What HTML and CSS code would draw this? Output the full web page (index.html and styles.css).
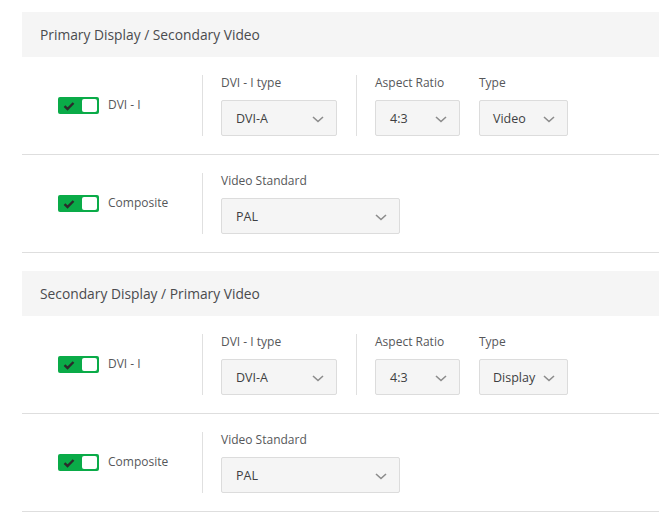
FILE: index.html
```html
<!DOCTYPE html>
<html>
<head>
<meta charset="utf-8">
<link rel="stylesheet" href="styles.css">
</head>
<body>
<div class="page">
  <section class="section">
    <div class="section-head">Primary Display / Secondary Video</div>
    <div class="row">
      <div class="toggle-col">
        <span class="toggle"><svg class="check" viewBox="0 0 12 10" width="12" height="10"><path d="M1.5 5.2 L4.5 8 L10.5 2" fill="none" stroke="#2b2b2b" stroke-width="2.4"/></svg><span class="knob"></span></span>
        <span class="toggle-label">DVI - I</span>
      </div>
      <div class="fields">
        <div class="field">
          <div class="field-label">DVI - I type</div>
          <div class="select w116"><span>DVI-A</span><svg class="chev" viewBox="0 0 12 7" width="12" height="7"><path d="M1 1 L6 5.5 L11 1" fill="none" stroke="#8c8c8c" stroke-width="1.6"/></svg></div>
        </div>
        <div class="vsep"></div>
        <div class="field">
          <div class="field-label">Aspect Ratio</div>
          <div class="select w85"><span>4:3</span><svg class="chev" viewBox="0 0 12 7" width="12" height="7"><path d="M1 1 L6 5.5 L11 1" fill="none" stroke="#8c8c8c" stroke-width="1.6"/></svg></div>
        </div>
        <div class="field">
          <div class="field-label">Type</div>
          <div class="select w89"><span>Video</span><svg class="chev" viewBox="0 0 12 7" width="12" height="7"><path d="M1 1 L6 5.5 L11 1" fill="none" stroke="#8c8c8c" stroke-width="1.6"/></svg></div>
        </div>
      </div>
    </div>
    <div class="row">
      <div class="toggle-col">
        <span class="toggle"><svg class="check" viewBox="0 0 12 10" width="12" height="10"><path d="M1.5 5.2 L4.5 8 L10.5 2" fill="none" stroke="#2b2b2b" stroke-width="2.4"/></svg><span class="knob"></span></span>
        <span class="toggle-label">Composite</span>
      </div>
      <div class="fields">
        <div class="field">
          <div class="field-label">Video Standard</div>
          <div class="select w179"><span>PAL</span><svg class="chev" viewBox="0 0 12 7" width="12" height="7"><path d="M1 1 L6 5.5 L11 1" fill="none" stroke="#8c8c8c" stroke-width="1.6"/></svg></div>
        </div>
      </div>
    </div>
  </section>
  <section class="section">
    <div class="section-head">Secondary Display / Primary Video</div>
    <div class="row">
      <div class="toggle-col">
        <span class="toggle"><svg class="check" viewBox="0 0 12 10" width="12" height="10"><path d="M1.5 5.2 L4.5 8 L10.5 2" fill="none" stroke="#2b2b2b" stroke-width="2.4"/></svg><span class="knob"></span></span>
        <span class="toggle-label">DVI - I</span>
      </div>
      <div class="fields">
        <div class="field">
          <div class="field-label">DVI - I type</div>
          <div class="select w116"><span>DVI-A</span><svg class="chev" viewBox="0 0 12 7" width="12" height="7"><path d="M1 1 L6 5.5 L11 1" fill="none" stroke="#8c8c8c" stroke-width="1.6"/></svg></div>
        </div>
        <div class="vsep"></div>
        <div class="field">
          <div class="field-label">Aspect Ratio</div>
          <div class="select w85"><span>4:3</span><svg class="chev" viewBox="0 0 12 7" width="12" height="7"><path d="M1 1 L6 5.5 L11 1" fill="none" stroke="#8c8c8c" stroke-width="1.6"/></svg></div>
        </div>
        <div class="field">
          <div class="field-label">Type</div>
          <div class="select w89"><span>Display</span><svg class="chev" viewBox="0 0 12 7" width="12" height="7"><path d="M1 1 L6 5.5 L11 1" fill="none" stroke="#8c8c8c" stroke-width="1.6"/></svg></div>
        </div>
      </div>
    </div>
    <div class="row">
      <div class="toggle-col">
        <span class="toggle"><svg class="check" viewBox="0 0 12 10" width="12" height="10"><path d="M1.5 5.2 L4.5 8 L10.5 2" fill="none" stroke="#2b2b2b" stroke-width="2.4"/></svg><span class="knob"></span></span>
        <span class="toggle-label">Composite</span>
      </div>
      <div class="fields">
        <div class="field">
          <div class="field-label">Video Standard</div>
          <div class="select w179"><span>PAL</span><svg class="chev" viewBox="0 0 12 7" width="12" height="7"><path d="M1 1 L6 5.5 L11 1" fill="none" stroke="#8c8c8c" stroke-width="1.6"/></svg></div>
        </div>
      </div>
    </div>
  </section>
</div>
</body>
</html>
```
FILE: styles.css
```css
* { box-sizing: border-box; }
html, body { margin: 0; padding: 0; background: #ffffff; overflow: hidden; }
body {
  font-family: "Open Sans", "Liberation Sans", sans-serif;
  color: #4f5053;
}
.page {
  padding: 12px 0 0 22px;
}
.section {
  margin-bottom: 18px;
}
.section-head {
  height: 45px;
  background: #f5f5f5;
  padding-left: 18px;
  display: flex;
  align-items: center;
  font-size: 13.8px;
  color: #4a4b4e;
}
.row {
  height: 98px;
  border-bottom: 1px solid #dedede;
  display: flex;
  align-items: center;
}
.toggle-col {
  width: 181px;
  height: 61px;
  padding-left: 36px;
  display: flex;
  align-items: center;
  gap: 9px;
  border-right: 1px solid #e0e0e0;
}
.toggle {
  width: 41px;
  height: 17px;
  background: #0aab48;
  border-radius: 2px;
  display: flex;
  align-items: center;
  justify-content: space-between;
  padding: 0 2px 0 5px;
}
.check { display: block; }
.knob {
  width: 15px;
  height: 13px;
  background: #ffffff;
  border-radius: 2px;
}
.toggle-label {
  font-size: 12px;
  color: #56575a;
  margin-top: -3px;
}
.fields {
  display: flex;
  align-items: stretch;
  height: 61px;
  padding-left: 18px;
  gap: 19px;
}
.vsep {
  width: 1px;
  background: #e0e0e0;
  margin-right: -1px;
}
.field {
  display: flex;
  flex-direction: column;
  justify-content: flex-end;
}
.field-label {
  font-size: 12px;
  color: #56575a;
  margin-bottom: 10px;
  line-height: 14px;
}
.select {
  height: 36px;
  background: #f5f5f5;
  border: 1px solid #dcdcdc;
  border-radius: 2px;
  display: flex;
  align-items: center;
  justify-content: space-between;
  padding: 0 12px 0 14px;
  font-size: 12.5px;
  color: #3e3f42;
}
.chev { display: block; margin-top: 2px; }
.w116 { width: 116px; }
.w85 { width: 85px; }
.w89 { width: 89px; padding-left: 13px; padding-right: 12px; }
.w179 { width: 179px; }
```
